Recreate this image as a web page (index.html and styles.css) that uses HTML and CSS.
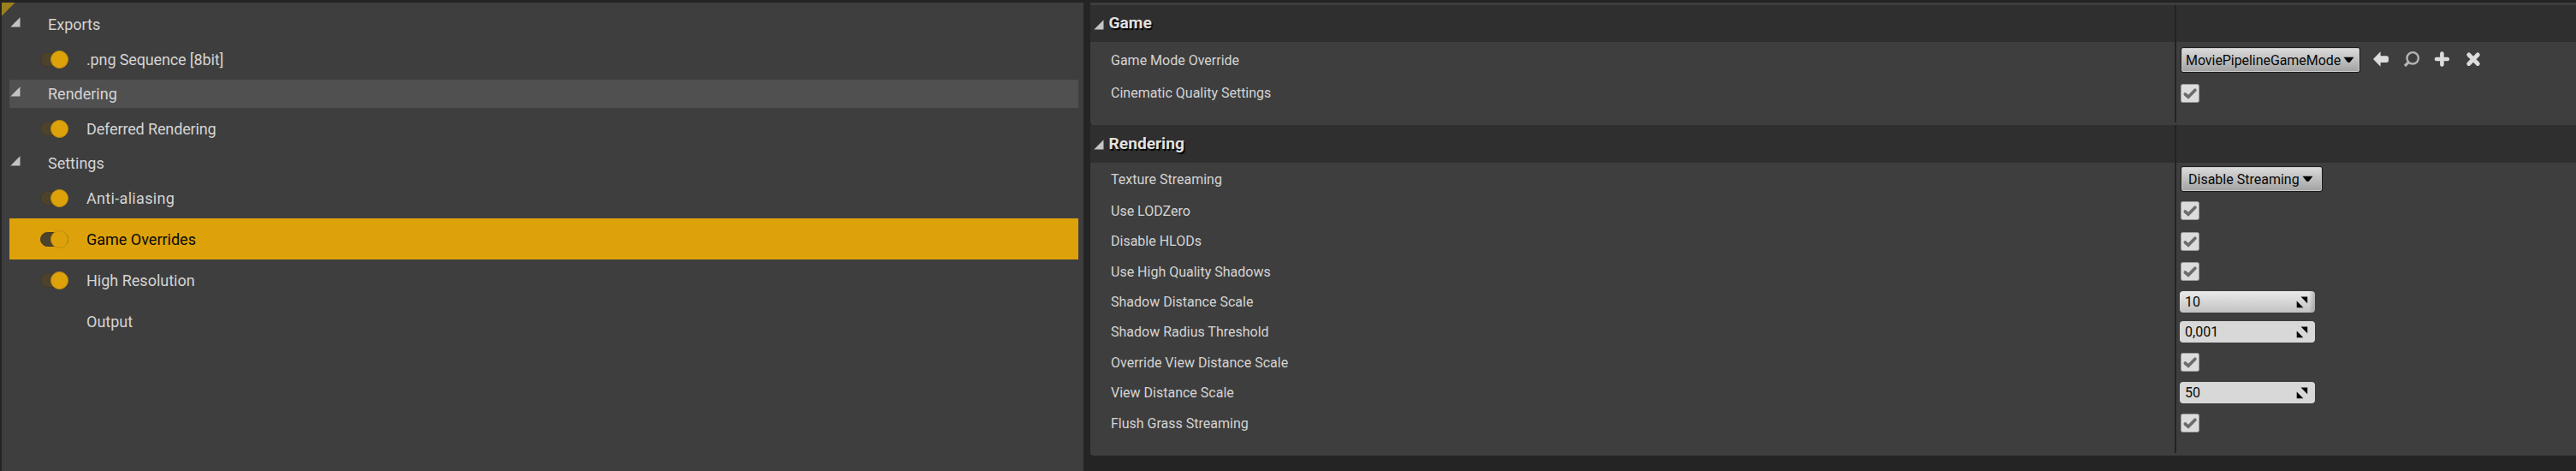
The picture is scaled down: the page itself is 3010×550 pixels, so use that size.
FILE: index.html
```html
<!DOCTYPE html>
<html lang="en">
<head>
<meta charset="utf-8">
<title>Movie Render Queue Settings</title>
<link rel="stylesheet" href="styles.css">
</head>
<body>
<svg class="defs" aria-hidden="true">
  <symbol id="expander" viewBox="0 0 12 12"><path d="M11.5 0.3V11.5H0.3Z" fill="#c4c4c4"/></symbol>
  <symbol id="check" viewBox="0 0 22 22"><path d="M5.3 12 9 15.3 16.9 7.2" fill="none" stroke="#6c6c6c" stroke-width="3.7" stroke-linecap="round"/></symbol>
  <symbol id="caret" viewBox="0 0 13 8"><path d="M0.5 0.8H12.5L8 6.4Q6.5 7.6 5 6.4Z" fill="#050505"/></symbol>
  <symbol id="spin" viewBox="0 0 14 14"><path d="M5.5 0.6H13.2V8.2ZM0.7 5.4V13.2H8.4Z" fill="#050505"/></symbol>
</svg>
<main class="window">
  <section class="tree">
    <div class="row group"><svg class="expander"><use href="#expander"/></svg><span>Exports</span></div>
    <div class="row item tight"><i class="toggle"></i><span>.png Sequence [8bit]</span></div>
    <div class="row group hover"><svg class="expander"><use href="#expander"/></svg><span>Rendering</span></div>
    <div class="row item tight"><i class="toggle"></i><span>Deferred Rendering</span></div>
    <div class="row group"><svg class="expander"><use href="#expander"/></svg><span>Settings</span></div>
    <div class="row item loose"><i class="toggle"></i><span>Anti-aliasing</span></div>
    <div class="row item selected"><i class="toggle"></i><span>Game Overrides</span></div>
    <div class="row item"><i class="toggle"></i><span>High Resolution</span></div>
    <div class="row item"><i class="toggle none"></i><span>Output</span></div>
  </section>
  <section class="details">
    <header class="head first"><div class="name"><svg class="expander"><use href="#expander"/></svg><span>Game</span></div><div class="value"></div></header>
    <div class="body game">
      <div class="prop h42"><div class="name">Game Mode Override</div><div class="value">
        <button class="combo mode"><span>MoviePipelineGameMode</span><svg class="caret"><use href="#caret"/></svg></button>
        <div class="tools">
          <svg viewBox="0 0 20 20"><path d="M1 10 9.6 1.2V6.3H16.5Q19 6.3 19 8.8V11.4Q19 13.9 16.5 13.9H9.6V18.8Z" fill="#dcdcdc"/></svg>
          <svg viewBox="0 0 20 20"><circle cx="11.2" cy="8.8" r="6.7" fill="none" stroke="#b4b4b4" stroke-width="2.4"/><path d="M6.8 13.2 2 18" stroke="#b4b4b4" stroke-width="3.2"/></svg>
          <svg viewBox="0 0 20 20"><path d="M9.4 3.6V16.4M3 10H15.8" stroke="#dcdcdc" stroke-width="4.6" stroke-linecap="round"/></svg>
          <svg viewBox="0 0 20 20"><path d="M4.8 5 15.2 15.4M15.2 5 4.8 15.4" stroke="#dcdcdc" stroke-width="5" stroke-linecap="round"/></svg>
        </div>
      </div></div>
      <div class="prop h36"><div class="name raised">Cinematic Quality Settings</div><div class="value"><i class="check"><svg><use href="#check"/></svg></i></div></div>
      <div class="prop rest"><div class="name"></div><div class="value"></div></div>
    </div>
    <header class="head"><div class="name"><svg class="expander"><use href="#expander"/></svg><span>Rendering</span></div><div class="value"></div></header>
    <div class="body">
      <div class="prop h38"><div class="name">Texture Streaming</div><div class="value"><button class="combo streaming"><span>Disable Streaming</span><svg class="caret"><use href="#caret"/></svg></button></div></div>
      <div class="prop h36"><div class="name">Use LODZero</div><div class="value"><i class="check"><svg><use href="#check"/></svg></i></div></div>
      <div class="prop h35"><div class="name">Disable HLODs</div><div class="value"><i class="check"><svg><use href="#check"/></svg></i></div></div>
      <div class="prop h36"><div class="name">Use High Quality Shadows</div><div class="value"><i class="check"><svg><use href="#check"/></svg></i></div></div>
      <div class="prop h35"><div class="name">Shadow Distance Scale</div><div class="value"><div class="spin active"><span>10</span><svg><use href="#spin"/></svg></div></div></div>
      <div class="prop h35"><div class="name">Shadow Radius Threshold</div><div class="value"><div class="spin"><span>0,001</span><svg><use href="#spin"/></svg></div></div></div>
      <div class="prop h36"><div class="name">Override View Distance Scale</div><div class="value"><i class="check"><svg><use href="#check"/></svg></i></div></div>
      <div class="prop h35"><div class="name">View Distance Scale</div><div class="value"><div class="spin"><span>50</span><svg><use href="#spin"/></svg></div></div></div>
      <div class="prop h36"><div class="name">Flush Grass Streaming</div><div class="value"><i class="check"><svg><use href="#check"/></svg></i></div></div>
      <div class="prop rest last"><div class="name"></div><div class="value"></div></div>
    </div>
  </section>
</main>
</body>
</html>
```
FILE: styles.css
```css
* { box-sizing: border-box; }
body { margin: 0; background: #242424; font-family: Roboto, "Liberation Sans", sans-serif; color: #d4d4d4; }
.defs { position: absolute; width: 0; height: 0; }
.window { display: flex; width: 3010px; height: 550px; padding: 3px 0 0 2px; overflow: hidden; }
svg { display: block; flex: none; }
.expander { width: 12px; height: 12px; }

.tree {
  width: 1264px; height: 547px; flex: none; padding: 9px 6px 0 9px; font-size: 18px;
  background: linear-gradient(135deg, #9c7f1c 0 10.6px, #3e3e3e 11.4px);
}
.row { display: flex; align-items: center; white-space: nowrap; }
.group { height: 33px; padding-left: 1px; }
.group .expander { margin: -6px 32px 0 0; }
.item { height: 48px; padding-left: 35.5px; }
.tight { letter-spacing: -0.13px; }
.loose { letter-spacing: 0.32px; }
.hover { background: #505050; }
.selected { background: #dda20a; color: #0a0a0a; }
.toggle {
  display: flex; justify-content: flex-end; align-items: center; width: 33px; height: 17px;
  margin-right: 21.5px; border-radius: 9px; background: #4d422a; border: 1px solid #43392a;
}
.toggle::after { content: ""; flex: none; width: 19px; height: 19px; margin-right: -1px; border-radius: 50%; background: #dda20a; border: 1px solid #c08f12; }
.none { visibility: hidden; }

.details { flex: 1; margin-left: 8px; }
.head, .prop { display: grid; grid-template-columns: 1267px 1fr; }
.head { height: 44px; background: #2f2f2f; font-size: 19.2px; font-weight: 700; color: #e0e0e0; text-shadow: 1.5px 1.5px 1px #000; }
.head.first { height: 46px; border-top: 3px solid #3e3e3e; }
.head .name { display: flex; align-items: center; padding: 0 0 2px 4px; }
.head .expander { margin: 4px 5.5px 0 0; }
.body { background: #3e3e3e; border-radius: 0 0 0 4px; font-size: 16px; }
.game { height: 97px; }
.value { border-left: 2px solid #222; display: flex; align-items: center; padding-left: 5px; }
.prop .name { display: flex; align-items: center; padding-left: 24px; white-space: nowrap; }
.prop .raised { padding-bottom: 2px; }
.h42 { height: 42px; }
.h38 { height: 38px; }
.h36 { height: 36px; }
.h35 { height: 35px; }
.rest { height: 16px; }
.last { height: 17px; }
.body:last-child { height: 342px; }

.combo {
  display: flex; align-items: center; height: 30px; padding: 0 0 0 5px; border: 1px solid #1c1c1c; border-radius: 3px;
  background: linear-gradient(#dcdcdc, #a2a2a2); box-shadow: inset 0 0 0 1px #c8c8c8;
  font: 16px Roboto, "Liberation Sans", sans-serif; color: #080808; white-space: nowrap;
}
.mode { width: 210px; letter-spacing: -0.06px; }
.streaming { width: 166px; padding-left: 8px; }
.caret { width: 13px; height: 8px; margin-left: 3px; }
.tools { display: flex; align-items: center; margin: -3px 0 0 14px; gap: 16px; }
.tools svg { width: 20px; height: 20px; }
.check { display: block; width: 22px; height: 22px; border-radius: 2.5px; background: #dcdcdc; border: 1px solid #9c9c9c; }
.check svg { width: 22px; height: 22px; margin: -1px; }
.spin {
  display: flex; align-items: center; justify-content: space-between; width: 158px; height: 25px; margin-left: -1px;
  padding: 0 8px 0 6px; border-radius: 4px; background: #d8d8d8; color: #080808;
}
.spin svg { width: 14px; height: 14px; }
.active { background: linear-gradient(90deg, transparent 151px, #8888 158px), linear-gradient(#eaeaea, #c2c2c2); }
```
